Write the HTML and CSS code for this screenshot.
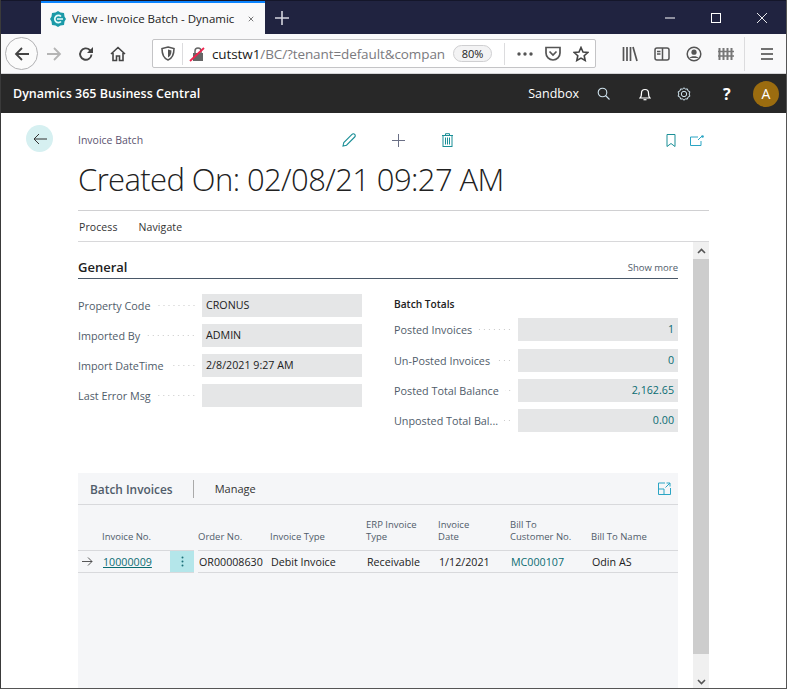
FILE: index.html
```html
<!DOCTYPE html>
<html lang="en">
<head>
  <meta charset="UTF-8" />
  <title>View - Invoice Batch - Dynamics 365 Business Central</title>
  <link rel="stylesheet" href="styles.css">
</head>
<body>
<div class="window">

  <div class="tabstrip">
    <div class="tab">
      <svg class="favicon" width="16" height="16" viewBox="0 0 16 16"><path d="M8 0l2.500 1.500L14 2l.5 3.500L16 8l-1.500 2.500L14 14l-3.500.5L8 16l-2.500-1.500L2 14l-.5-3.500L0 8l1.500-2.500L2 2l3.500-.5z" fill="#1b9aa8"/><path d="M11 5.500A3.600 3.600 0 1 0 11 10.500" fill="none" stroke="#e8fbfb" stroke-width="1.700"/><path d="M7 8h6" stroke="#e8fbfb" stroke-width="1.500"/></svg>
      <span class="tab-title">View - Invoice Batch - Dynamic</span>
      <svg width="12" height="12" viewBox="0 0 12 12"><path d="M1.500 1.500l9 9M10.500 1.500l-9 9" stroke="#444" stroke-width="1.400"/></svg>
    </div>
    <svg class="newtab" width="14" height="14" viewBox="0 0 14 14"><path d="M7 0v14M0 7h14" stroke="#d4d5de" stroke-width="1.600"/></svg>
    <div class="winctl">
      <svg width="10" height="10" viewBox="0 0 10 10"><path d="M0 5h10" stroke="#fff"/></svg>
      <svg width="10" height="10" viewBox="0 0 10 10"><rect x=".5" y=".5" width="9" height="9" fill="none" stroke="#fff"/></svg>
      <svg width="10" height="10" viewBox="0 0 10 10"><path d="M0 0l10 10M10 0L0 10" stroke="#fff" stroke-width=".9"/></svg>
    </div>
  </div>

  <div class="toolbar">
    <div class="backbtn">
      <svg width="16" height="16" viewBox="0 0 16 16"><path d="M15 8H2M8 2L2 8l6 6" fill="none" stroke="#444" stroke-width="1.800"/></svg>
    </div>
    <div class="tool tool-fwd">
      <svg width="16" height="16" viewBox="0 0 16 16"><path d="M1 8h13M8 2l6 6-6 6" fill="none" stroke="#b5b5b5" stroke-width="1.800"/></svg>
    </div>
    <div class="tool">
      <svg width="16" height="16" viewBox="0 0 16 16"><path d="M13.500 8.500A5.700 5.700 0 1 1 11.800 4L14 6" fill="none" stroke="#444" stroke-width="1.900"/><path d="M15 1v6H9z" fill="#444"/></svg>
    </div>
    <div class="tool">
      <svg width="16" height="16" viewBox="0 0 16 16"><path d="M1 8l7-6.500L15 8M3 7v7.500h3.500V10h3v4.500H13V7" fill="none" stroke="#444" stroke-width="1.600"/></svg>
    </div>
    <div class="urlbar">
      <svg class="shield" width="14" height="15" viewBox="0 0 14 15"><path d="M7 1l6 1.500C13 9 11 12.500 7 14 3 12.500 1 9 1 2.500z" fill="none" stroke="#555" stroke-width="1.600"/><path d="M7 3.500l3.500 1C10.500 8.500 9 10.500 7 11.500z" fill="#555"/></svg>
      <span class="urlsep"></span>
      <svg class="lock" width="16" height="16" viewBox="0 0 16 16"><rect x="4" y="7" width="10" height="8" fill="#666"/><path d="M6 7V5a3 3 0 0 1 6 0v2" fill="none" stroke="#666" stroke-width="1.500"/><path d="M1 15L15 2" stroke="#f0244e" stroke-width="1.800"/></svg>
      <span class="url"><b>cutstw1</b>/BC/?tenant=default&amp;compan</span>
      <span class="zoompill">80%</span>
      <span class="urlsep urlsep-b"></span>
      <svg class="dots" width="16" height="4" viewBox="0 0 16 4"><circle cx="2" cy="2" r="1.700" fill="#555"/><circle cx="8" cy="2" r="1.700" fill="#555"/><circle cx="14" cy="2" r="1.700" fill="#555"/></svg>
      <svg class="pocket" width="16" height="15" viewBox="0 0 16 15"><path d="M1 1.500h14V7a7 7 0 0 1-14 0z" fill="none" stroke="#555" stroke-width="1.700"/><path d="M4.500 5.500L8 9l3.500-3.500" fill="none" stroke="#555" stroke-width="1.700"/></svg>
      <svg class="star" width="16" height="16" viewBox="0 0 16 16"><path d="M8 1.500l2 4.500 4.800.5-3.600 3.200 1 4.800L8 12.100l-4.200 2.400 1-4.800L1.200 6.500 6 6z" fill="none" stroke="#444" stroke-width="1.600"/></svg>
    </div>
    <div class="tool tool-lib">
      <svg width="16" height="16" viewBox="0 0 16 16"><path d="M1.500 1v14M5 1v14M8.500 1v14M11 1l4 14" stroke="#555" stroke-width="1.700"/></svg>
    </div>
    <div class="tool tool-r">
      <svg width="16" height="14" viewBox="0 0 16 14"><rect x="1" y="1" width="14" height="12" rx="2" fill="none" stroke="#555" stroke-width="1.500"/><path d="M8.500 1v12M3 4.500h3.500M3 7h3.500" stroke="#555" stroke-width="1.500"/></svg>
    </div>
    <div class="tool tool-r">
      <svg width="16" height="16" viewBox="0 0 16 16"><circle cx="8" cy="8" r="6.800" fill="none" stroke="#555" stroke-width="1.500"/><circle cx="8" cy="6.200" r="2.600" fill="#555"/><path d="M3.500 12c1-2.500 8-2.500 9 0" fill="#555"/></svg>
    </div>
    <div class="tool tool-r">
      <svg width="16" height="14" viewBox="0 0 16 14"><path d="M1.500 1v12M5.500 1v12M9.500 1v12M13.500 1v12" stroke="#777" stroke-width="2"/><path d="M0 4.500h16M0 9h16" stroke="#777" stroke-width="1.500"/></svg>
    </div>
    <span class="toolsep"></span>
    <div class="tool tool-menu">
      <svg width="14" height="12" viewBox="0 0 14 12"><path d="M1 1h12M1 6h12M1 11h12" stroke="#444" stroke-width="1.700"/></svg>
    </div>
  </div>

  <div class="appbar">
    <span class="appname">Dynamics 365 Business Central</span>
    <span class="env">Sandbox</span>
    <svg class="app-ico ico-search" width="13" height="13" viewBox="0 0 13 13"><circle cx="5.500" cy="5.500" r="4.300" fill="none" stroke="#cfe3ee" stroke-width="1.100"/><path d="M8.500 8.500l4 4" stroke="#cfe3ee" stroke-width="1.100"/></svg>
    <svg class="app-ico ico-bell" width="12" height="14" viewBox="0 0 12 14"><path d="M1 11c1.500-1 1.500-3 1.500-5a3.500 3.500 0 0 1 7 0c0 2 0 4 1.500 5z" fill="none" stroke="#fff" stroke-width="1.200"/><path d="M4.500 12.700h3" stroke="#fff" stroke-width="1.200"/></svg>
    <svg class="app-ico ico-gear" width="14" height="14" viewBox="0 0 14 14"><circle cx="7" cy="7" r="2.700" fill="none" stroke="#cfe3ee"/><path d="M7 .7l1.400 1.500 2-.3.600 2 1.900.9-.7 2.200.7 2.200-1.900.9-.6 2-2-.3L7 13.300l-1.400-1.500-2 .3-.6-2-1.900-.9.7-2.200-.7-2.200 1.900-.9.600-2 2 .3z" fill="none" stroke="#cfe3ee"/></svg>
    <span class="help">?</span>
    <span class="avatar">A</span>
  </div>

  <div class="page">
    <div class="backcol">
      <span class="pageback">
        <svg width="14" height="12" viewBox="0 0 14 12"><path d="M14 6H1M6 1L1 6l5 5" fill="none" stroke="#333" stroke-width="1"/></svg>
      </span>
    </div>

    <div class="pagemain">
      <div class="pagehead">
        <span class="crumb">Invoice Batch</span>
        <svg class="act act-edit" width="14" height="14" viewBox="0 0 14 14"><path d="M1 13l.8-3.500L10 1.300a1.500 1.500 0 0 1 2.700 2.700L4.500 12.200z" fill="none" stroke="#1b8f97" stroke-width="1.100"/></svg>
        <svg class="act act-add" width="13" height="13" viewBox="0 0 13 13"><path d="M6.500 0v13M0 6.500h13" stroke="#6a6f85" stroke-width="1"/></svg>
        <svg class="act act-del" width="11" height="14" viewBox="0 0 11 14"><path d="M0 2.500h11M3.500 2.500V.7h4v1.800" fill="none" stroke="#1b8f97"/><rect x="1" y="2.500" width="9" height="11" fill="none" stroke="#1b8f97"/><path d="M3.500 4.500v7M5.500 4.500v7M7.500 4.500v7" stroke="#1b8f97"/></svg>
        <svg class="act act-mark" width="10" height="13" viewBox="0 0 10 13"><path d="M1 .5h8v12L5 9.500l-4 3z" fill="none" stroke="#1b8f97"/></svg>
        <svg class="act act-share" width="14" height="11" viewBox="0 0 14 11"><path d="M8 2H.5v8.500h10.500V6" fill="none" stroke="#2ba5c4"/><path d="M8 5l4-4" stroke="#2ba5c4"/><circle cx="12.500" cy="1.500" r="1.300" fill="#2ba5c4"/></svg>
      </div>
      <h1 class="title">Created On: 02/08/21 09:27 AM</h1>
      <div class="menubar">
        <span>Process</span>
        <span>Navigate</span>
      </div>

      <div class="scrollarea">
        <div class="content">
          <div class="sectionhead">
            <h2>General</h2>
            <span class="showmore">Show more</span>
          </div>

          <div class="fieldcols">
            <div class="fieldcol">
              <div class="field"><span class="label">Property Code</span><span class="leader"></span><span class="value">CRONUS</span></div>
              <div class="field"><span class="label">Imported By</span><span class="leader"></span><span class="value">ADMIN</span></div>
              <div class="field"><span class="label">Import DateTime</span><span class="leader"></span><span class="value">2/8/2021 9:27 AM</span></div>
              <div class="field"><span class="label">Last Error Msg</span><span class="leader"></span><span class="value"></span></div>
            </div>
            <div class="fieldcol">
              <div class="grouptitle">Batch Totals</div>
              <div class="field"><span class="label">Posted Invoices</span><span class="leader"></span><span class="value num">1</span></div>
              <div class="field field-gap"><span class="label">Un-Posted Invoices</span><span class="leader"></span><span class="value num">0</span></div>
              <div class="field"><span class="label">Posted Total Balance</span><span class="leader"></span><span class="value num">2,162.65</span></div>
              <div class="field"><span class="label">Unposted Total Bal...</span><span class="leader"></span><span class="value num">0.00</span></div>
            </div>
          </div>

          <div class="listpart">
            <div class="listhead">
              <span class="listtitle">Batch Invoices</span>
              <span class="listsep"></span>
              <span class="listmenu">Manage</span>
              <svg class="expand" width="13" height="13" viewBox="0 0 13 13"><path d="M7 1H.5v11.500H12.500V6" fill="none" stroke="#2ba5c4"/><path d="M.5 7h5.500v5.500" fill="none" stroke="#2ba5c4"/><path d="M7.500 5.500l4.500-4.500M8.500 1H12v3.500" fill="none" stroke="#2ba5c4"/></svg>
            </div>
            <div class="grid">
              <span></span>
              <span class="th">Invoice No.</span>
              <span></span>
              <span class="th">Order No.</span>
              <span class="th">Invoice Type</span>
              <span class="th">ERP Invoice<br>Type</span>
              <span class="th">Invoice<br>Date</span>
              <span class="th">Bill To<br>Customer No.</span>
              <span class="th">Bill To Name</span>

              <span class="td rowarrow"><svg width="11" height="9" viewBox="0 0 11 9"><path d="M0 4.500h10M6 .5l4 4-4 4" fill="none" stroke="#444" stroke-width=".9"/></svg></span>
              <span class="td"><a class="link" href="#">10000009</a></span>
              <span class="td rowmenu"><svg width="3" height="11" viewBox="0 0 3 11"><circle cx="1.500" cy="1.500" r="1" fill="#1b6f78"/><circle cx="1.500" cy="5.500" r="1" fill="#1b6f78"/><circle cx="1.500" cy="9.500" r="1" fill="#1b6f78"/></svg></span>
              <span class="td">OR00008630</span>
              <span class="td">Debit Invoice</span>
              <span class="td">Receivable</span>
              <span class="td">1/12/2021</span>
              <span class="td teal">MC000107</span>
              <span class="td">Odin AS</span>
            </div>
          </div>
        </div>

        <div class="scrollbar">
          <svg width="9" height="6" viewBox="0 0 9 6"><path d="M1 5l3.500-3.500L8 5" fill="none" stroke="#555" stroke-width="1.600"/></svg>
          <div class="thumb"></div>
          <svg width="9" height="6" viewBox="0 0 9 6"><path d="M1 1l3.500 3.500L8 1" fill="none" stroke="#555" stroke-width="1.600"/></svg>
        </div>
      </div>
    </div>
  </div>
</div>
</body>
</html>
```

FILE: styles.css
```css
* {
  margin: 0; padding: 0;
  box-sizing: border-box;
}
html, body {
  height: 100%;
  overflow: hidden;
}
body {
  background: #fff;
  font-family: 'Open Sans', 'Noto Sans', sans-serif;
  color: #212121;
}
.window {
  width: 787px;
  height: 689px;
  display: flex;
  flex-direction: column;
  border-left: 1px solid #3a3a3a;
  border-right: 1px solid #555;
  border-bottom: 1px solid #555;
  overflow: hidden;
}

/* browser chrome */
.tabstrip {
  height: 34px;
  flex: none;
  background: #202340;
  border-top: 1px solid #14162a;
  display: flex;
  align-items: flex-end;
  padding-left: 40px;
}
.tab {
  width: 224px;
  height: 33px;
  background: #f9f9fa;
  border-top: 2px solid #0a84ff;
  display: flex;
  align-items: center;
  padding: 0 11px 0 9px;
}
.favicon {
  flex: none;
}
.tab-title {
  width: 167px;
  flex: none;
  margin-left: 6px;
  margin-right: 9px;
  font-size: 11.500px;
  white-space: nowrap;
  overflow: hidden;
  color: #222;
}
.newtab {
  align-self: center;
  margin-left: 10px;
  margin-top: 0;
}
.winctl {
  margin-left: auto;
  align-self: center;
  display: flex;
  gap: 36px;
  padding-right: 19px;
}
.toolbar {
  height: 40px;
  flex: none;
  background: #f9f9fa;
  border-bottom: 1px solid #d4d4d6;
  display: flex;
  align-items: center;
  padding-left: 4px;
}
.backbtn {
  width: 33px;
  height: 33px;
  border-radius: 50%;
  border: 1px solid #b1b1b3;
  background: #fbfbfb;
  display: flex;
  align-items: center;
  justify-content: center;
  flex: none;
}
.tool {
  width: 32px;
  height: 32px;
  display: flex;
  align-items: center;
  justify-content: center;
  flex: none;
}
.urlbar {
  width: 444px;
  height: 29px;
  margin-left: 18px;
  background: #fff;
  border: 1px solid #c4c4c6;
  border-radius: 2px;
  display: flex;
  align-items: center;
  padding-left: 8px;
  flex: none;
}
.shield {
  flex: none;
}
.urlsep {
  width: 1px;
  height: 22px;
  background: #dcdcde;
  margin-left: 7px;
  flex: none;
}
.lock {
  margin-left: 6px;
  flex: none;
}
.url {
  width: 233px;
  margin-left: 7px;
  font-size: 13.500px;
  color: #7a7a7e;
  white-space: nowrap;
  overflow: hidden;
  flex: none;
  letter-spacing: -.1px;
}
.url b {
  font-weight: 400;
  color: #1a1a1a;
}
.zoompill {
  width: 39px;
  height: 17px;
  margin-left: 8px;
  border: 1px solid #cfcfd1;
  border-radius: 9px;
  background: #f3f3f4;
  font-size: 11px;
  line-height: 15px;
  text-align: center;
  color: #222;
  flex: none;
}
.urlsep-b {
  margin-left: 12px;
}
.dots {
  margin-left: 12px;
  flex: none;
}
.pocket {
  margin-left: 12px;
  flex: none;
}
.star {
  margin-left: 12px;
  flex: none;
}
.tool-lib {
  margin-left: 18px;
}
.toolsep {
  width: 1px;
  height: 34px;
  background: #dcdcde;
  margin-left: 2px;
  flex: none;
}
.tool-menu {
  margin-left: 6px;
}

/* app bar */
.appbar {
  height: 39px;
  flex: none;
  background: #282828;
  color: #fff;
  display: flex;
  align-items: center;
  padding-left: 12px;
  margin-right: -1px;
}
.appname {
  font-size: 12.500px;
  font-weight: 600;
  flex: 1;
}
.env {
  font-size: 12.500px;
  margin-right: 18px;
}
.app-ico {
  flex: none;
}
.ico-bell {
  margin-left: 29px;
}
.ico-gear {
  margin-left: 26px;
}
.help {
  font-size: 16px;
  font-weight: 700;
  margin-left: 32px;
  width: 10px;
}
.avatar {
  width: 26px;
  height: 26px;
  border-radius: 50%;
  background: #9b6c0f;
  font-size: 14px;
  line-height: 26px;
  text-align: center;
  margin-left: 20px;
  margin-right: 8px;
}

/* page */
.page {
  flex: 1;
  min-height: 0;
  display: flex;
  background: #fff;
}
.backcol {
  width: 77px;
  flex: none;
  padding: 12px 0 0 25px;
}
.pageback {
  display: flex;
  align-items: center;
  justify-content: center;
  width: 27px;
  height: 27px;
  border-radius: 50%;
  background: #d6f0f1;
}
.pagemain {
  width: 631px;
  flex: none;
  display: flex;
  flex-direction: column;
  min-height: 0;
}
.pagehead {
  height: 38px;
  display: flex;
  align-items: center;
  padding-top: 16px;
}
.crumb {
  width: 264px;
  font-size: 10.500px;
  color: #5c5470;
}
.act {
  flex: none;
}
.act-add {
  margin-left: 36px;
}
.act-del {
  margin-left: 37px;
}
.act-mark {
  margin-left: 213px;
}
.act-share {
  margin-left: 14px;
}
.title {
  font-size: 31px;
  font-weight: 300;
  line-height: 42px;
  height: 60px;
  padding-top: 7px;
  border-bottom: 1px solid #d0d0d2;
  white-space: nowrap;
  color: #212121;
  letter-spacing: -.6px;
}
.menubar {
  height: 31px;
  display: flex;
  align-items: center;
  gap: 21px;
  padding-left: 1px;
  padding-top: 1px;
  border-bottom: 1px solid #d8d8da;
  font-size: 10.500px;
  letter-spacing: .1px;
  color: #333;
}
.scrollarea {
  flex: 1;
  min-height: 0;
  display: flex;
}
.content {
  width: 600px;
  flex: none;
  display: flex;
  flex-direction: column;
}
.sectionhead {
  height: 37px;
  display: flex;
  align-items: flex-end;
  justify-content: space-between;
  border-bottom: 1px solid #4a5868;
  padding-bottom: 2px;
}
.sectionhead h2 {
  font-size: 13px;
  font-weight: 600;
  color: #212121;
}
.showmore {
  font-size: 9.500px;
  color: #505c6a;
  padding-bottom: 2px;
}
.fieldcols {
  display: flex;
  justify-content: space-between;
  padding-top: 15px;
  height: 194px;
}
.fieldcol {
  width: 284px;
  display: flex;
  flex-direction: column;
  gap: 7px;
}
.grouptitle {
  font-size: 10.200px;
  font-weight: 600;
  height: 18px;
  padding-top: 3px;
  margin-bottom: -1px;
  color: #212121;
}
.field {
  height: 23px;
  display: flex;
  align-items: center;
}
.field-gap {
  margin-top: 1px;
}
.label {
  font-size: 10.800px;
  color: #505c6a;
  white-space: nowrap;
}
.leader {
  flex: 1;
  margin: 0 6px;
  height: 1px;
  background-image: radial-gradient(circle, #c8c8c8 .6px, transparent .7px);
  background-size: 5px 1px;
  background-position: right;
}
.value {
  width: 160px;
  height: 23px;
  flex: none;
  background: #e5e6e7;
  font-size: 10.700px;
  line-height: 23px;
  padding: 0 4px;
  color: #212121;
}
.num {
  text-align: right;
  color: #0a6c72;
}
.listpart {
  flex: 1;
  background: #f5f6f8;
}
.listhead {
  height: 32px;
  display: flex;
  align-items: center;
  padding: 0 7px 0 12px;
  border-bottom: 1px solid #d8d9dc;
}
.listtitle {
  font-size: 11.900px;
  font-weight: 600;
  color: #505c6a;
}
.listsep {
  width: 1px;
  height: 18px;
  background: #aaa;
  margin-left: 20px;
}
.listmenu {
  font-size: 11px;
  margin-left: 21px;
  color: #333;
  flex: 1;
}
.grid {
  display: grid;
  grid-template-columns: 24px 68px 28px 72px 96px 72px 72px 81px 87px;
  grid-template-rows: 45px 23px;
  align-items: end;
}
.th {
  font-size: 9.500px;
  line-height: 12px;
  color: #505c6a;
  padding-bottom: 7px;
}
.td {
  height: 23px;
  display: flex;
  align-items: center;
  font-size: 10.700px;
  color: #212121;
  border-top: 1px solid #d8d9dc;
  border-bottom: 1px solid #d8d9dc;
  padding-left: 1px;
  white-space: nowrap;
}
.rowarrow {
  padding-left: 4px;
}
.rowmenu {
  background: #b4e6ea;
  margin-right: 4px;
  justify-content: center;
  padding-left: 0;
}
.link {
  color: #0a6c72;
}
.teal {
  color: #0a6c72;
}
.scrollbar {
  width: 16px;
  margin-left: 15px;
  flex: none;
  background: #f0f0f0;
  display: flex;
  flex-direction: column;
  align-items: center;
  justify-content: space-between;
  padding: 6px 0 3px;
}
.thumb {
  flex: 1;
  width: 100%;
  margin: 5px 0 25px;
  background: #cdcdcd;
}
```
